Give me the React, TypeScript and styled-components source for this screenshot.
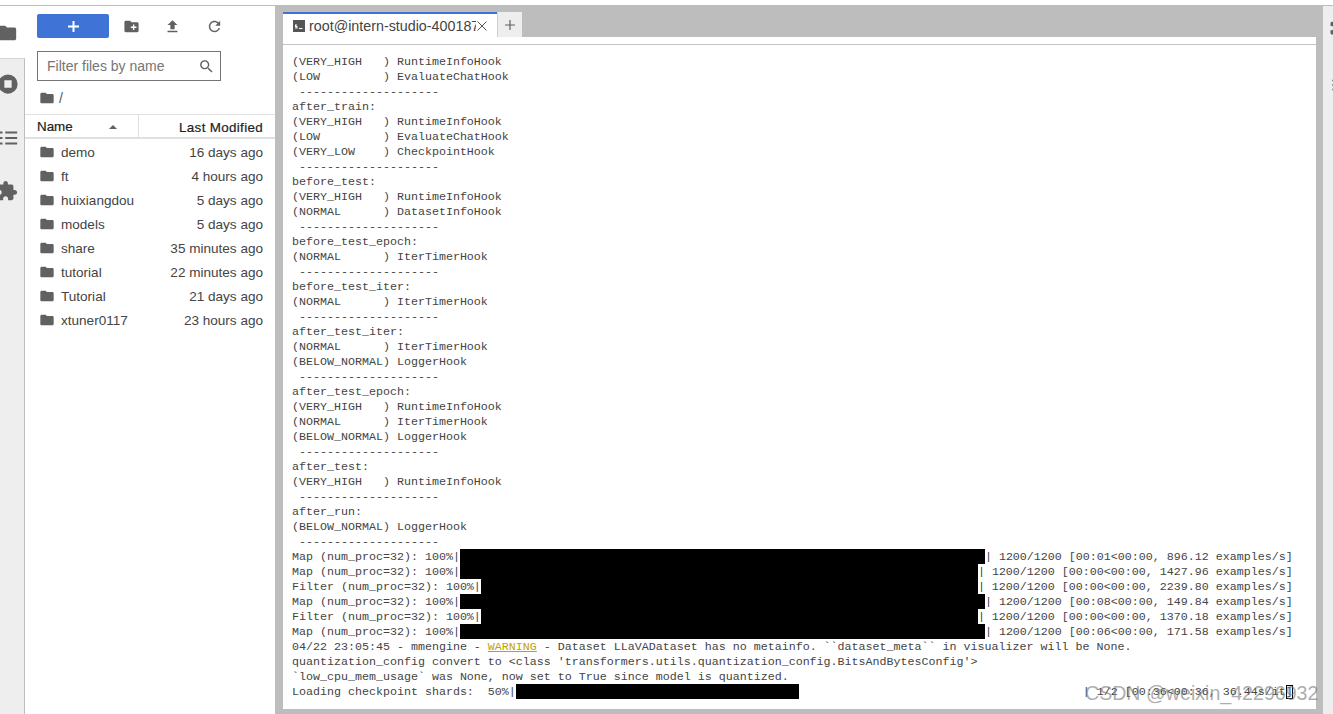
import styled, { createGlobalStyle } from "styled-components";
import { ReactNode } from "react";

const GlobalStyle = createGlobalStyle`
  html, body {
    margin: 0;
    padding: 0;
    height: 100%;
    overflow: hidden;
    background: #fff;
  }
  * { box-sizing: border-box; }
`;

const Page = styled.div`
  width: 1333px;
  height: 714px;
  display: flex;
  flex-direction: column;
  overflow: hidden;
  position: relative;
  font-family: "Liberation Sans", Arial, sans-serif;
`;
const TopStrip = styled.div`
  height: 6px;
  flex: none;
  background: #fff;
  border-bottom: 1px solid #bdbdbd;
`;
const Body = styled.div`
  flex: 1;
  display: flex;
  min-height: 0;
  background: #bdbdbd;
`;

/* left icon rail */
const Rail = styled.nav`
  width: 25px;
  flex: none;
  display: flex;
  flex-direction: column;
  background: #fff;
  overflow: hidden;
`;
const RailActive = styled.div`
  height: 52px;
  flex: none;
  padding: 16px 0 0;
  color: #616161;
`;
const RailRest = styled.div`
  flex: 1;
  display: flex;
  flex-direction: column;
  align-items: flex-start;
  gap: 31.5px;
  padding-top: 14px;
  background: #eeeeee;
  border-top: 1px solid #d4d4d4;
  border-right: 1px solid #bdbdbd;
  color: #616161;
`;
const RailIcon = styled.svg<{ $shift: number }>`
  display: block;
  width: 22px;
  height: 22px;
  margin-left: ${(p) => p.$shift}px;
  flex: none;
  fill: currentColor;
`;

/* file browser */
const FilePanel = styled.aside`
  width: 250px;
  flex: none;
  background: #fff;
  display: flex;
  flex-direction: column;
  color: #333;
`;
const Toolbar = styled.div`
  display: flex;
  align-items: center;
  height: 24px;
  margin: 8px 0 0 12px;
`;
const NewButton = styled.button`
  width: 72px;
  height: 24px;
  border: 0;
  border-radius: 2px;
  background: #3f73d6;
  color: #fff;
  display: flex;
  align-items: center;
  justify-content: center;
  padding: 0;
`;
const ToolIcon = styled.svg<{ $gap: number }>`
  width: 17px;
  height: 17px;
  margin-left: ${(p) => p.$gap}px;
  fill: #616161;
  flex: none;
`;
const FilterBox = styled.div`
  width: 184px;
  height: 30px;
  margin: 13px 0 0 12px;
  border: 1px solid #757575;
  display: flex;
  align-items: center;
  justify-content: space-between;
  padding: 0 5px 0 9px;
  color: #757575;
  font-size: 14px;
`;
const Crumbs = styled.div`
  height: 33px;
  display: flex;
  align-items: center;
  gap: 4px;
  padding-left: 14px;
  font-size: 14px;
  color: #555;
`;
const HeaderRow = styled.div`
  height: 25px;
  display: flex;
  align-items: stretch;
  border-top: 1px solid #e0e0e0;
  border-bottom: 2px solid #e0e0e0;
  font-size: 13.4px;
  font-weight: 500;
  color: #222;
  -webkit-text-stroke: 0.2px #222;
`;
const NameHead = styled.div`
  width: 114px;
  display: flex;
  align-items: center;
  justify-content: space-between;
  padding: 1px 21px 0 12px;
  border-right: 1px solid #e0e0e0;
`;
const SortCaret = styled.span`
  width: 0;
  height: 0;
  border-left: 4px solid transparent;
  border-right: 4px solid transparent;
  border-bottom: 4px solid #616161;
`;
const ModifiedHead = styled.div`
  flex: 1;
  display: flex;
  align-items: center;
  justify-content: flex-end;
  padding: 2px 12px 0 0;
  letter-spacing: 0.33px;
`;
const FileList = styled.ul`
  list-style: none;
  margin: 0;
  padding: 1px 0 0;
`;
const FileRow = styled.li`
  height: 24px;
  display: flex;
  align-items: center;
  padding: 0 12px 0 14px;
  font-size: 13.55px;
  color: #444;
`;
const FolderGlyph = styled.svg`
  width: 16px;
  height: 16px;
  fill: #616161;
  flex: none;
  margin-right: 6px;
`;
const FileName = styled.span`
  flex: 1;
`;

/* terminal area */
const Main = styled.main`
  flex: 1;
  display: flex;
  flex-direction: column;
  min-width: 0;
  padding: 0 7px 5px 8px;
`;
const TabBar = styled.div`
  height: 31px;
  flex: none;
  display: flex;
  align-items: flex-end;
`;
const Tab = styled.div`
  width: 214px;
  height: 25px;
  background: #fff;
  border-top: 2px solid #3f73d6;
  display: flex;
  align-items: center;
  padding: 0 7px 0 10px;
  font-size: 14.3px;
  color: #444;
`;
const TabTitle = styled.span`
  width: 167px;
  margin-left: 4px;
  overflow: hidden;
  white-space: nowrap;
`;
const TabClose = styled.svg`
  width: 12px;
  height: 12px;
  stroke: #555;
  stroke-width: 1;
  fill: none;
  flex: none;
`;
const AddTab = styled.div`
  width: 25px;
  height: 25px;
  background: #eeeeee;
  border-left: 1px solid #cfcfcf;
  color: #616161;
  display: flex;
  align-items: center;
  justify-content: center;
`;
const TabRule = styled.div`
  height: 8px;
  flex: none;
  background: #fff;
  border-bottom: 1px solid #c4c4c4;
`;
const Terminal = styled.pre`
  flex: 1;
  margin: 0;
  padding: 9px 0 0 9px;
  background: #fff;
  overflow: hidden;
  font-family: "Liberation Mono", "Courier New", monospace;
  font-size: 11.66px;
  line-height: 15px;
  color: #444;
`;
const TermLine = styled.div`
  height: 15px;
  white-space: pre;
`;
const TermText = styled.span`
  position: relative;
  top: 1px;
`;
const Bar = styled.span<{ $cells: number; $empty?: boolean }>`
  display: inline-block;
  vertical-align: top;
  height: 15px;
  width: ${(p) => p.$cells * 7}px;
  background: ${(p) => (p.$empty ? "transparent" : "#000")};
`;
const Warn = styled.span`
  color: #c4a000;
  text-decoration: underline;
`;
const Cursor = styled.span`
  outline: 1px solid #000;
  outline-offset: -1px;
  display: inline-block;
  height: 14px;
  color: #444;
`;
const Watermark = styled.div`
  position: absolute;
  left: 1085px;
  top: 682px;
  font-size: 19.6px;
  line-height: 22px;
  white-space: nowrap;
  color: rgba(120, 120, 120, 0.62);
`;

const RightRail = styled.aside`
  width: 10px;
  flex: none;
  background: #eeeeee;
  overflow: hidden;
  color: #616161;
  padding-top: 12px;
  display: flex;
  flex-direction: column;
  gap: 40px;
`;
const EdgeIcon = styled.svg<{ $shift: number }>`
  display: block;
  width: 18px;
  height: 18px;
  flex: none;
  fill: currentColor;
  margin-left: ${(p) => p.$shift}px;
`;

const FOLDER = "M10 4H4c-1.1 0-1.99.9-1.99 2L2 18c0 1.1.9 2 2 2h16c1.1 0 2-.9 2-2V8c0-1.1-.9-2-2-2h-8l-2-2z";
const PUZZLE =
  "M20.5 11H19V7c0-1.1-.9-2-2-2h-4V3.5C13 2.12 11.88 1 10.5 1S8 2.12 8 3.5V5H4c-1.1 0-1.99.9-1.99 2v3.8H3.5c1.49 0 2.7 1.21 2.7 2.7s-1.21 2.7-2.7 2.7H2V20c0 1.1.9 2 2 2h3.8v-1.5c0-1.49 1.21-2.7 2.7-2.7 1.49 0 2.7 1.21 2.7 2.7V22H17c1.1 0 2-.9 2-2v-4h1.5c1.38 0 2.5-1.12 2.5-2.5S21.88 11 20.5 11z";
const LIST = "M9 5h13v2H9zM9 11h13v2H9zM9 17h13v2H9zM3 5h3v2H3zM3 11h3v2H3zM3 17h3v2H3z";
const RUNNING = "M12 1.5a10.5 10.5 0 1 0 0 21 10.5 10.5 0 0 0 0-21zM8 8h8v8H8z";

function Folder() {
  return (
    <FolderGlyph viewBox="0 0 24 24">
      <path d={FOLDER} />
    </FolderGlyph>
  );
}

const files = [
  ["demo", "16 days ago"],
  ["ft", "4 hours ago"],
  ["huixiangdou", "5 days ago"],
  ["models", "5 days ago"],
  ["share", "35 minutes ago"],
  ["tutorial", "22 minutes ago"],
  ["Tutorial", "21 days ago"],
  ["xtuner0117", "23 hours ago"],
];

const RULE = " --------------------";
const plainLines = [
  "(VERY_HIGH   ) RuntimeInfoHook",
  "(LOW         ) EvaluateChatHook",
  RULE,
  "after_train:",
  "(VERY_HIGH   ) RuntimeInfoHook",
  "(LOW         ) EvaluateChatHook",
  "(VERY_LOW    ) CheckpointHook",
  RULE,
  "before_test:",
  "(VERY_HIGH   ) RuntimeInfoHook",
  "(NORMAL      ) DatasetInfoHook",
  RULE,
  "before_test_epoch:",
  "(NORMAL      ) IterTimerHook",
  RULE,
  "before_test_iter:",
  "(NORMAL      ) IterTimerHook",
  RULE,
  "after_test_iter:",
  "(NORMAL      ) IterTimerHook",
  "(BELOW_NORMAL) LoggerHook",
  RULE,
  "after_test_epoch:",
  "(VERY_HIGH   ) RuntimeInfoHook",
  "(NORMAL      ) IterTimerHook",
  "(BELOW_NORMAL) LoggerHook",
  RULE,
  "after_test:",
  "(VERY_HIGH   ) RuntimeInfoHook",
  RULE,
  "after_run:",
  "(BELOW_NORMAL) LoggerHook",
  RULE,
];

const progress: [string, number, string][] = [
  ["Map (num_proc=32): 100%|", 75, "| 1200/1200 [00:01<00:00, 896.12 examples/s]"],
  ["Map (num_proc=32): 100%|", 74, "| 1200/1200 [00:00<00:00, 1427.96 examples/s]"],
  ["Filter (num_proc=32): 100%|", 71, "| 1200/1200 [00:00<00:00, 2239.80 examples/s]"],
  ["Map (num_proc=32): 100%|", 75, "| 1200/1200 [00:08<00:00, 149.84 examples/s]"],
  ["Filter (num_proc=32): 100%|", 71, "| 1200/1200 [00:00<00:00, 1370.18 examples/s]"],
  ["Map (num_proc=32): 100%|", 75, "| 1200/1200 [00:06<00:00, 171.58 examples/s]"],
];

function Line({ children }: { children: ReactNode }) {
  return <TermLine>{children}</TermLine>;
}

export default function App() {
  return (
    <Page>
      <GlobalStyle />
      <TopStrip />
      <Body>
        <Rail>
          <RailActive>
            <RailIcon $shift={-4} viewBox="0 0 24 24">
              <path d={FOLDER} />
            </RailIcon>
          </RailActive>
          <RailRest>
            <RailIcon $shift={-3} viewBox="0 0 24 24">
              <path fillRule="evenodd" d={RUNNING} />
            </RailIcon>
            <RailIcon $shift={-3} viewBox="0 0 24 24">
              <path d={LIST} />
            </RailIcon>
            <RailIcon $shift={-4} viewBox="0 0 24 24">
              <path d={PUZZLE} />
            </RailIcon>
          </RailRest>
        </Rail>

        <FilePanel>
          <Toolbar>
            <NewButton aria-label="New launcher">
              <svg width="13" height="13" viewBox="0 0 13 13" fill="#fff">
                <path d="M5.5 1h2v4.5H12v2H7.5V12h-2V7.5H1v-2h4.5z" />
              </svg>
            </NewButton>
            <ToolIcon $gap={14} viewBox="0 0 24 24">
              <path d="M20 6h-8l-2-2H4c-1.11 0-1.99.89-1.99 2L2 18c0 1.11.89 2 2 2h16c1.11 0 2-.89 2-2V8c0-1.11-.89-2-2-2zm-1 8h-3v3h-2v-3h-3v-2h3V9h2v3h3v2z" />
            </ToolIcon>
            <ToolIcon $gap={24} viewBox="0 0 24 24">
              <path d="M9 16h6v-6h4l-7-7-7 7h4zm-4 2h14v2H5z" />
            </ToolIcon>
            <ToolIcon $gap={25} viewBox="0 0 24 24">
              <path d="M17.65 6.35C16.2 4.9 14.21 4 12 4c-4.42 0-7.99 3.58-7.99 8s3.57 8 7.99 8c3.73 0 6.84-2.55 7.73-6h-2.08c-.82 2.33-3.04 4-5.65 4-3.31 0-6-2.69-6-6s2.69-6 6-6c1.66 0 3.14.69 4.22 1.78L13 11h7V4l-2.35 2.35z" />
            </ToolIcon>
          </Toolbar>
          <FilterBox>
            Filter files by name
            <ToolIcon $gap={0} viewBox="0 0 24 24">
              <path d="M15.5 14h-.79l-.28-.27C15.41 12.59 16 11.11 16 9.5 16 5.91 13.09 3 9.5 3S3 5.91 3 9.5 5.91 16 9.5 16c1.61 0 3.09-.59 4.23-1.57l.27.28v.79l5 4.99L20.49 19l-4.99-5zm-6 0C7.01 14 5 11.99 5 9.5S7.01 5 9.5 5 14 7.01 14 9.5 11.99 14 9.5 14z" />
            </ToolIcon>
          </FilterBox>
          <Crumbs>
            <FolderGlyph viewBox="0 0 24 24" style={{ marginRight: 0 }}>
              <path d={FOLDER} />
            </FolderGlyph>
            /
          </Crumbs>
          <HeaderRow>
            <NameHead>
              Name
              <SortCaret />
            </NameHead>
            <ModifiedHead>Last Modified</ModifiedHead>
          </HeaderRow>
          <FileList>
            {files.map(([name, modified]) => (
              <FileRow key={name}>
                <Folder />
                <FileName>{name}</FileName>
                {modified}
              </FileRow>
            ))}
          </FileList>
        </FilePanel>

        <Main>
          <TabBar>
            <Tab>
              <svg width="12" height="12" viewBox="0 0 12 12">
                <rect width="12" height="12" fill="#555" />
                <path d="M2 4.5h2v1H3v.5h1.5v2.5H2v-1h1.5V7H2zM6 8h3.5v1H6z" fill="#fff" />
              </svg>
              <TabTitle>root@intern-studio-400187</TabTitle>
              <TabClose viewBox="0 0 12 12">
                <path d="M1.5 1.5l9 9M10.5 1.5l-9 9" />
              </TabClose>
            </Tab>
            <AddTab>
              <svg width="12" height="12" viewBox="0 0 12 12" fill="#616161">
                <path d="M5.4 1h1.2v4.4H11v1.2H6.6V11H5.4V6.6H1V5.4h4.4z" />
              </svg>
            </AddTab>
          </TabBar>
          <TabRule />
          <Terminal>
            {plainLines.map((text, i) => (
              <Line key={i}>
                <TermText>{text}</TermText>
              </Line>
            ))}
            {progress.map(([left, cells, right], i) => (
              <Line key={i}>
                <TermText>{left}</TermText>
                <Bar $cells={cells} />
                <TermText>{right}</TermText>
              </Line>
            ))}
            <Line>
              <TermText>
                04/22 23:05:45 - mmengine - <Warn>WARNING</Warn> - Dataset LLaVADataset has no metainfo. ``dataset_meta`` in
                visualizer will be None.
              </TermText>
            </Line>
            <Line>
              <TermText>{"quantization_config convert to <class 'transformers.utils.quantization_config.BitsAndBytesConfig'>"}</TermText>
            </Line>
            <Line>
              <TermText>`low_cpu_mem_usage` was None, now set to True since model is quantized.</TermText>
            </Line>
            <Line>
              <TermText>{"Loading checkpoint shards:  50%|"}</TermText>
              <Bar $cells={40.5} />
              <Bar $cells={40.5} $empty />
              <TermText>
                {"| 1/2 [00:36<00:36, 36.44s/it"}
                <Cursor>]</Cursor>
              </TermText>
            </Line>
          </Terminal>
        </Main>

        <RightRail>
          <EdgeIcon $shift={5.5} viewBox="0 0 24 24">
            <path d={PUZZLE} />
          </EdgeIcon>
          <EdgeIcon $shift={7} viewBox="0 0 24 24">
            <path d={LIST} />
          </EdgeIcon>
        </RightRail>
      </Body>
      <Watermark>CSDN @weixin_42296932</Watermark>
    </Page>
  );
}
